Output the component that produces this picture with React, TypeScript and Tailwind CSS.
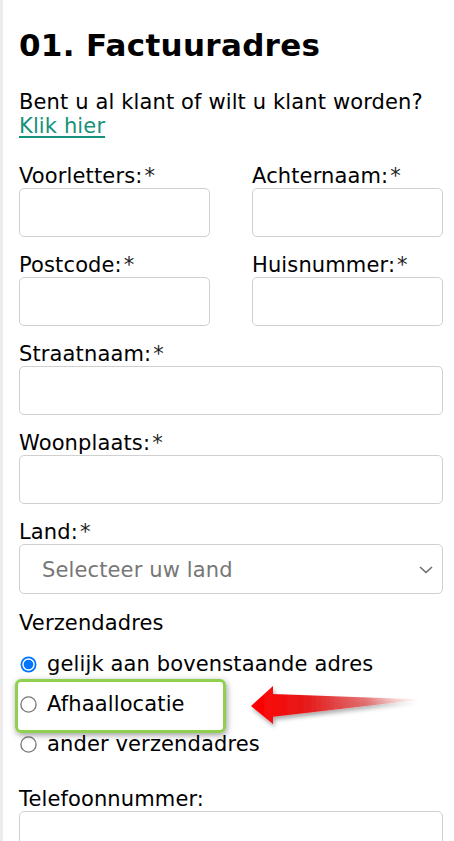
import React from "react";

const font = "font-['DejaVu_Sans',Verdana,sans-serif]";

function Field({ label, required = true, className = "" }: { label: string; required?: boolean; className?: string }) {
  return (
    <div className={`mb-[16px] ${className}`}>
      <div className="h-[24px] leading-[24px] whitespace-nowrap">
        {label}
        {required && <span className="ml-[2px] text-[#222]">*</span>}
      </div>
      <div className="h-[49px] rounded-[5px] border border-[#d0d0d0] bg-white" />
    </div>
  );
}

function Radio({ checked = false }: { checked?: boolean }) {
  return (
    <svg width="17" height="17" viewBox="0 0 17 17" className="shrink-0">
      {checked ? (
        <>
          <circle cx="8.5" cy="8.5" r="8" fill="#0075ff" />
          <circle cx="8.5" cy="8.5" r="6.2" fill="#ffffff" />
          <circle cx="8.5" cy="8.5" r="4.8" fill="#0075ff" />
        </>
      ) : (
        <circle cx="8.5" cy="8.5" r="7.6" fill="#ffffff" stroke="#767676" strokeWidth="1.3" />
      )}
    </svg>
  );
}

export default function App() {
  return (
    <div className={`flex h-[841px] overflow-hidden bg-white text-black ${font}`}>
      <div className="w-[3px] shrink-0 bg-[#ebebeb]" />
      <div className="flex-1 pl-[16px] pr-[11px] text-[21px] tracking-[0.13px]">
        <h1 className="mt-[27px] text-[31px] font-bold leading-[36px] tracking-[0.3px]">01. Factuuradres</h1>
        <p className="mt-[27px] leading-[24px]">
          Bent u al klant of wilt u klant worden?
          <br />
          <a className="text-[#16917b] underline underline-offset-[3px] decoration-[1.5px]">Klik hier</a>
        </p>

        <div className="mt-[26px] grid grid-cols-2 gap-x-[42px]">
          <Field label="Voorletters:" />
          <Field label="Achternaam:" />
          <Field label="Postcode:" />
          <Field label="Huisnummer:" />
        </div>
        <Field label="Straatnaam:" />
        <Field label="Woonplaats:" />

        <div className="mb-[17px]">
          <div className="h-[24px] leading-[24px]">
            Land:<span className="ml-[2px] text-[#222]">*</span>
          </div>
          <div className="flex h-[50px] items-center justify-between rounded-[5px] border border-[#d0d0d0] bg-white pl-[22px] pr-[8px]">
            <span className="translate-y-[2px] text-[#777]">Selecteer uw land</span>
            <svg width="16" height="10" viewBox="0 0 16 10">
              <path d="M2 3 L8 8.5 L14 3" fill="none" stroke="#6b6b6b" strokeWidth="1.6" />
            </svg>
          </div>
        </div>

        <div className="h-[24px] leading-[24px]">Verzendadres</div>
        <div className="mt-[9px]">
          <div className="flex h-[40px] items-center gap-[10px] pl-[1px] leading-[24px]">
            <Radio checked />
            <span>gelijk aan bovenstaande adres</span>
          </div>
          <div className="relative flex h-[40px] items-center gap-[10px] pl-[1px] leading-[24px]">
            <Radio />
            <span>Afhaallocatie</span>
            <div className="pointer-events-none absolute left-[-4px] top-[-5px] h-[54px] w-[211px] rounded-[6px] border-[3px] border-[#8fd14f] shadow-[1px_2px_6px_rgba(0,0,0,0.4)]" />
            <svg
              className="pointer-events-none absolute left-[226px] top-[-4px]"
              width="180"
              height="56"
              viewBox="0 0 180 56"
            >
              <defs>
                <linearGradient id="arr" x1="0" y1="0" x2="1" y2="0">
                  <stop offset="0" stopColor="#ff0000" />
                  <stop offset="0.35" stopColor="#e51c1c" />
                  <stop offset="0.7" stopColor="#e05a5a" stopOpacity="0.8" />
                  <stop offset="1" stopColor="#f4b0b0" stopOpacity="0.1" />
                </linearGradient>
                <filter id="sh" x="-10%" y="-30%" width="130%" height="170%">
                  <feDropShadow dx="1.5" dy="3" stdDeviation="2" floodColor="#000" floodOpacity="0.35" />
                </filter>
              </defs>
              <polygon
                points="6,26 28,6 28,14 171,19.3 171,20.2 28,36.7 28,44"
                fill="url(#arr)"
                filter="url(#sh)"
              />
            </svg>
          </div>
          <div className="flex h-[40px] items-center gap-[10px] pl-[1px] leading-[24px]">
            <Radio />
            <span>ander verzendadres</span>
          </div>
        </div>

        <div className="mt-[23px]">
          <div className="h-[24px] leading-[24px]">Telefoonnummer:</div>
          <div className="h-[49px] rounded-[5px] border border-[#d0d0d0] bg-white" />
        </div>
      </div>
    </div>
  );
}
